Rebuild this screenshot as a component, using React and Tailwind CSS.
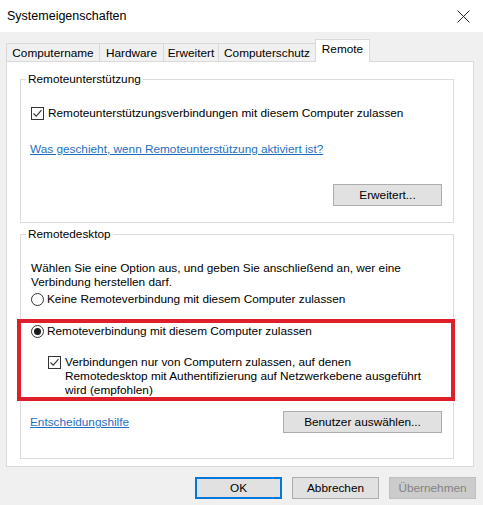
import React from 'react';

function CheckBox() {
    return (
        <span className="inline-flex h-[13px] w-[13px] shrink-0 items-center justify-center border border-[#333333] bg-white">
            <svg width="11" height="11" viewBox="0 0 11 11">
                <path d="M1.5 5.5 L4.2 8.2 L9.5 2.2" fill="none" stroke="#333333" strokeWidth="1.1"/>
            </svg>
        </span>
    );
}

function Radio({checked}) {
    return (
        <span className="inline-flex h-[13px] w-[13px] shrink-0 items-center justify-center rounded-full border border-[#333333] bg-white">
            {checked && <span className="h-[7px] w-[7px] rounded-full bg-[#1a1a1a]"/>}
        </span>
    );
}

function Tab({label, width, active}) {
    if (active) {
        return (
            <div
                className="relative z-10 -mb-px flex h-[23px] items-start justify-center border-x border-t border-[#d9d9d9] bg-white pt-[2px] text-black"
                style={{width}}
            >
                {label}
            </div>
        );
    }
    return (
        <div
            className="flex h-[18px] items-center justify-center border-l border-t border-[#d9d9d9] bg-[#f0f0f0] text-black"
            style={{width}}
        >
            {label}
        </div>
    );
}

function Button({children, className = ''}) {
    return (
        <div className={`flex h-[22px] items-center justify-center border border-[#adadad] bg-[#e1e1e1] text-black ${className}`}>
            {children}
        </div>
    );
}

export default function App() {
    return (
        <div
            className="flex h-[505px] w-[483px] flex-col bg-[#f0f0f0] text-[11.8px] leading-[14px] text-black"
            style={{fontFamily: '"Liberation Sans", Arial, sans-serif'}}
        >
            {/* title bar */}
            <div className="flex h-[32px] items-center justify-between bg-white pl-[7px] pr-[13px]">
                <span className="text-[12.5px]">Systemeigenschaften</span>
                <svg width="13" height="13" viewBox="0 0 13 13">
                    <path d="M0.5 0.5 L12.5 12.5 M12.5 0.5 L0.5 12.5" stroke="#222" strokeWidth="1"/>
                </svg>
            </div>

            <div className="px-[6px] pt-[7px]">
                <div className="flex items-end">
                    <Tab label="Computername" width={93}/>
                    <Tab label="Hardware" width={64}/>
                    <Tab label="Erweitert" width={55}/>
                    <Tab label="Computerschutz" width={97}/>
                    <Tab label="Remote" width={55} active/>
                </div>

                <div className="h-[406px] w-[468px] border border-[#d9d9d9] bg-white pl-[13px] pr-[19px] pt-[10px]">
                    <fieldset className="h-[151px] border border-[#dcdcdc]">
                        <legend className="ml-[5px] px-[2px]">Remoteunterstützung</legend>
                        <div className="mt-[20px] flex items-center gap-[4px] pl-[10px]">
                            <CheckBox/>
                            <span>Remoteunterstützungsverbindungen mit diesem Computer zulassen</span>
                        </div>
                        <div className="mt-[22px] pl-[9px]">
                            <span className="text-[#1f6fbf] underline">Was geschieht, wenn Remoteunterstützung aktiviert ist?</span>
                        </div>
                        <div className="mt-[28px] flex justify-end pr-[11px]">
                            <Button className="w-[109px]">Erweitert...</Button>
                        </div>
                    </fieldset>

                    <fieldset className="mt-[4px] h-[232px] border border-[#dcdcdc]">
                        <legend className="ml-[5px] px-[2px]">Remotedesktop</legend>
                        <p className="mt-[20px] pl-[10px] pr-[40px]">
                            Wählen Sie eine Option aus, und geben Sie anschließend an, wer eine Verbindung herstellen darf.
                        </p>
                        <div className="mt-[3px] flex items-center gap-[3px] pl-[10px]">
                            <Radio/>
                            <span>Keine Remoteverbindung mit diesem Computer zulassen</span>
                        </div>
                        <div className="-ml-[4px] -mr-[2px] mt-[13px] h-[82px] border-4 border-[#e01f2d]">
                            <div className="mt-[1px] flex items-center gap-[3px] pl-[10px]">
                                <Radio checked/>
                                <span>Remoteverbindung mit diesem Computer zulassen</span>
                            </div>
                            <div className="mt-[17px] flex items-start gap-[4px] pl-[27px]">
                                <span className="mt-[1px]"><CheckBox/></span>
                                <span>
                                    Verbindungen nur von Computern zulassen, auf denen<br/>
                                    Remotedesktop mit Authentifizierung auf Netzwerkebene ausgeführt<br/>
                                    wird (empfohlen)
                                </span>
                            </div>
                        </div>
                        <div className="mt-[10px] flex items-center justify-between pl-[9px] pr-[11px]">
                            <span className="text-[#1f6fbf] underline">Entscheidungshilfe</span>
                            <Button className="w-[159px]">Benutzer auswählen...</Button>
                        </div>
                    </fieldset>
                </div>
            </div>

            <div className="flex justify-end gap-[10px] pr-[7px] pt-[10px]">
                <div className="flex h-[22px] w-[87px] items-center justify-center border-2 border-[#0078d7] bg-[#e1e1e1]">OK</div>
                <Button className="w-[87px]">Abbrechen</Button>
                <div className="flex h-[22px] w-[87px] items-center justify-center border border-[#bfbfbf] bg-[#cccccc] text-[#838383]">Übernehmen</div>
            </div>
        </div>
    );
}
